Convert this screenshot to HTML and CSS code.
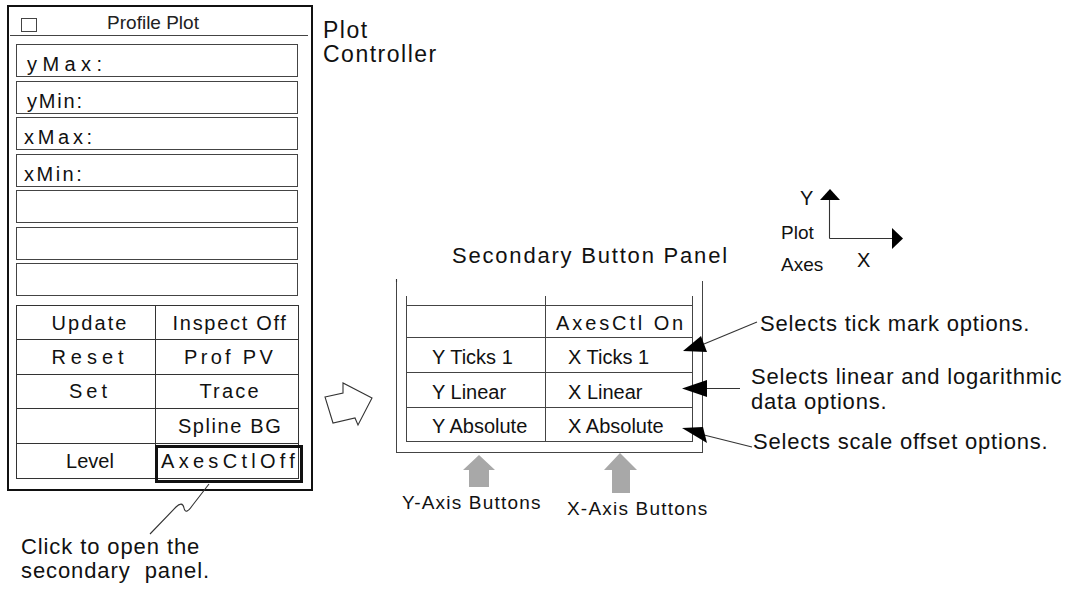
FILE: index.html
```html
<!DOCTYPE html>
<html lang="en">
<head>
    <meta charset="UTF-8">
    <title>Plot Controller</title>
    <link rel="stylesheet" href="styles.css">
</head>
<body>
<div class="canvas">
    <!-- 主面板 -->
    <section class="window">
        <header class="titlebar">
            <span class="check"></span>
            <span class="title">Profile Plot</span>
        </header>
        <div class="fields">
            <div class="field field-y ls-ymax">yMax:</div>
            <div class="field field-y ls-ymin">yMin:</div>
            <div class="field field-x ls-xmax">xMax:</div>
            <div class="field field-x ls-xmin">xMin:</div>
            <div class="field"></div>
            <div class="field"></div>
            <div class="field"></div>
        </div>
        <div class="buttons">
            <div class="btn btn-l ls-update">Update</div>
            <div class="btn btn-r ls-inspect">Inspect Off</div>
            <div class="btn btn-l ls-reset">Reset</div>
            <div class="btn btn-r ls-prof">Prof PV</div>
            <div class="btn btn-l ls-set">Set</div>
            <div class="btn btn-r ls-trace">Trace</div>
            <div class="btn btn-l"></div>
            <div class="btn btn-r ls-spline">Spline BG</div>
            <div class="btn btn-l btn-last">Level</div>
            <div class="btn btn-r btn-last btn-hot ls-axes">AxesCtlOff<span class="hot-frame"></span></div>
        </div>
    </section>

    <div class="label plot-ctl">Plot<br>Controller</div>

    <!-- 坐标轴说明 -->
    <div class="label axis-y">Y</div>
    <div class="label axis-x">X</div>
    <div class="label axis-name">Plot<br>Axes</div>

    <!-- 二级面板 -->
    <div class="label sbp-title">Secondary Button Panel</div>
    <div class="sbp">
        <div class="sbp-grid">
            <div class="cell cell-l cell-gap"></div>
            <div class="cell cell-gap"></div>
            <div class="cell cell-l"></div>
            <div class="cell cell-r cell-on">AxesCtl On</div>
            <div class="cell cell-l">Y Ticks 1</div>
            <div class="cell cell-r">X Ticks 1</div>
            <div class="cell cell-l">Y Linear</div>
            <div class="cell cell-r">X Linear</div>
            <div class="cell cell-l">Y Absolute</div>
            <div class="cell cell-r">X Absolute</div>
        </div>
    </div>

    <div class="label note note-tick">Selects tick mark options.</div>
    <div class="label note note-linear">Selects linear and logarithmic<br>data options.</div>
    <div class="label note note-scale">Selects scale offset options.</div>

    <div class="label cap cap-y">Y-Axis Buttons</div>
    <div class="label cap cap-x">X-Axis Buttons</div>

    <div class="label click">Click to open the<br>secondary&nbsp; panel.</div>

    <!-- 连线和箭头 -->
    <svg class="overlay" width="1070" height="597" viewBox="0 0 1070 597">
        <g fill="none" stroke="#333" stroke-width="1.1">
            <path d="M209,484 L192,506 C188,512 185,513 184,508 C183,503 180,503 176,507 L150,534"/>
            <line x1="829.5" y1="199" x2="829.5" y2="238.5"/>
            <line x1="829.5" y1="238.5" x2="893" y2="238.5"/>
            <line x1="704" y1="344" x2="757" y2="322"/>
            <line x1="705" y1="388.5" x2="740" y2="388.5"/>
            <line x1="704" y1="435" x2="752" y2="447"/>
            <line x1="396.5" y1="279" x2="396.5" y2="282"/>
        </g>
        <g fill="#000">
            <polygon points="830,189 820,200 840,200"/>
            <polygon points="903,238.5 892,228 892,249"/>
            <polygon points="683,351 701,336 707,352"/>
            <polygon points="682,388.5 707,380 707,397"/>
            <polygon points="682,428 703,427 707,443"/>
        </g>
        <g fill="#a8a8a8">
            <polygon points="479,455 495,470 489,470 489,487 469,487 469,470 463,470"/>
            <polygon points="620,453 637,470 630,470 630,493 612,493 612,470 604,470"/>
        </g>
        <polygon points="325,397 343,393 343,383 372,398 358,425 355,418 333,423" fill="#fff" stroke="#333" stroke-width="1.1"/>
    </svg>
</div>
</body>
</html>
```

FILE: styles.css
```css
*{
    padding: 0;
    margin: 0;
    box-sizing: border-box;
}
body{
    background: #fff;
    color: #111;
    font-family: "Liberation Sans", Arial, sans-serif;
}
.canvas{
    position: relative;
    width: 1070px;
    height: 597px;
    overflow: hidden;
}
.overlay{
    position: absolute;
    left: 0;
    top: 0;
    pointer-events: none;
}

/* 主面板 */
.window{
    position: absolute;
    left: 7px;
    top: 5px;
    width: 306px;
    height: 486px;
    border: 2px solid #111;
}
.titlebar{
    display: flex;
    align-items: flex-end;
    height: 29px;
    margin: 0 3px 0 1px;
    padding: 0 0 1px 11px;
    border-bottom: 1px solid #444;
}
.check{
    width: 16px;
    height: 14px;
    margin-bottom: 2px;
    border: 1px solid #444;
}
.title{
    flex: 1;
    margin-right: 39px;
    text-align: center;
    font-size: 19px;
    line-height: 22px;
    color: #222;
}
.fields{
    display: flex;
    flex-direction: column;
    gap: 3.5px;
    margin: 8px 13px 0 7px;
}
.field{
    display: flex;
    align-items: flex-end;
    height: 33px;
    padding: 0 0 1px 10px;
    border: 1px solid #444;
    font-size: 20px;
    line-height: 22px;
}
.field-x{
    padding-left: 7px;
}
.ls-ymax{ letter-spacing: 5.4px; }
.ls-ymin{ letter-spacing: 1.8px; }
.ls-xmax{ letter-spacing: 3.7px; }
.ls-xmin{ letter-spacing: 2.5px; }

.buttons{
    display: grid;
    grid-template-columns: 139px 1fr;
    grid-template-rows: repeat(5, 1fr);
    height: 174px;
    margin: 9px 12px 0 7px;
    border: 1px solid #333;
}
.btn{
    position: relative;
    display: flex;
    align-items: center;
    justify-content: center;
    border-bottom: 1px solid #333;
    font-size: 20px;
    line-height: 22px;
}
.btn-l{
    padding-left: 8px;
    border-right: 1px solid #333;
}
.btn-r{
    padding-left: 5px;
}
.btn-last{
    border-bottom: none;
}
.hot-frame{
    position: absolute;
    left: -1px;
    top: 1px;
    right: -4px;
    bottom: -5px;
    border: 3px solid #111;
}
.ls-update{ letter-spacing: 2.1px; }
.ls-inspect{ letter-spacing: 1.7px; }
.ls-reset{ letter-spacing: 5px; }
.ls-prof{ letter-spacing: 3.3px; }
.ls-set{ letter-spacing: 4px; }
.ls-trace{ letter-spacing: 2.2px; }
.ls-spline{ letter-spacing: 1.6px; }
.ls-axes{ letter-spacing: 4.3px; }

/* 文字标注 */
.label{
    position: absolute;
    white-space: nowrap;
}
.plot-ctl{
    left: 323px;
    top: 18px;
    font-size: 23px;
    line-height: 24px;
    letter-spacing: 1.5px;
}
.axis-y{
    left: 800px;
    top: 187px;
    font-size: 20px;
    line-height: 22px;
}
.axis-x{
    left: 857px;
    top: 249px;
    font-size: 20px;
    line-height: 22px;
}
.axis-name{
    left: 781px;
    top: 217px;
    font-size: 19px;
    line-height: 32px;
}
.sbp-title{
    left: 452px;
    top: 244px;
    font-size: 22px;
    line-height: 24px;
    letter-spacing: 1.8px;
}
.note{
    font-size: 22px;
    line-height: 24px;
    letter-spacing: 0.8px;
}
.note-tick{
    left: 760px;
    top: 312px;
}
.note-linear{
    left: 751px;
    top: 364px;
    line-height: 25px;
}
.note-scale{
    left: 753px;
    top: 430px;
}
.cap{
    font-size: 19px;
    line-height: 22px;
    letter-spacing: 1.2px;
}
.cap-y{
    left: 402px;
    top: 492px;
}
.cap-x{
    left: 567px;
    top: 498px;
}
.click{
    left: 21px;
    top: 535px;
    font-size: 22px;
    line-height: 24px;
    letter-spacing: 0.9px;
}

/* 二级面板 */
.sbp{
    position: absolute;
    left: 396px;
    top: 281px;
    width: 307px;
    padding: 15px 9px 10px 9px;
    border: 1px solid #444;
    border-top: none;
}
.sbp-grid{
    display: grid;
    grid-template-columns: 139px 1fr;
    grid-template-rows: 9px 32px 35px 35px 34px;
    border: 1px solid #444;
    border-top: none;
}
.cell{
    display: flex;
    align-items: center;
    padding-top: 3px;
    border-top: 1px solid #444;
    font-size: 20px;
    line-height: 22px;
}
.cell-l{
    padding-left: 25px;
    border-right: 1px solid #444;
}
.cell-r{
    padding-left: 22px;
}
.cell-gap{
    border-top: none;
}
.cell-on{
    padding-left: 10px;
    letter-spacing: 2.9px;
}
```
